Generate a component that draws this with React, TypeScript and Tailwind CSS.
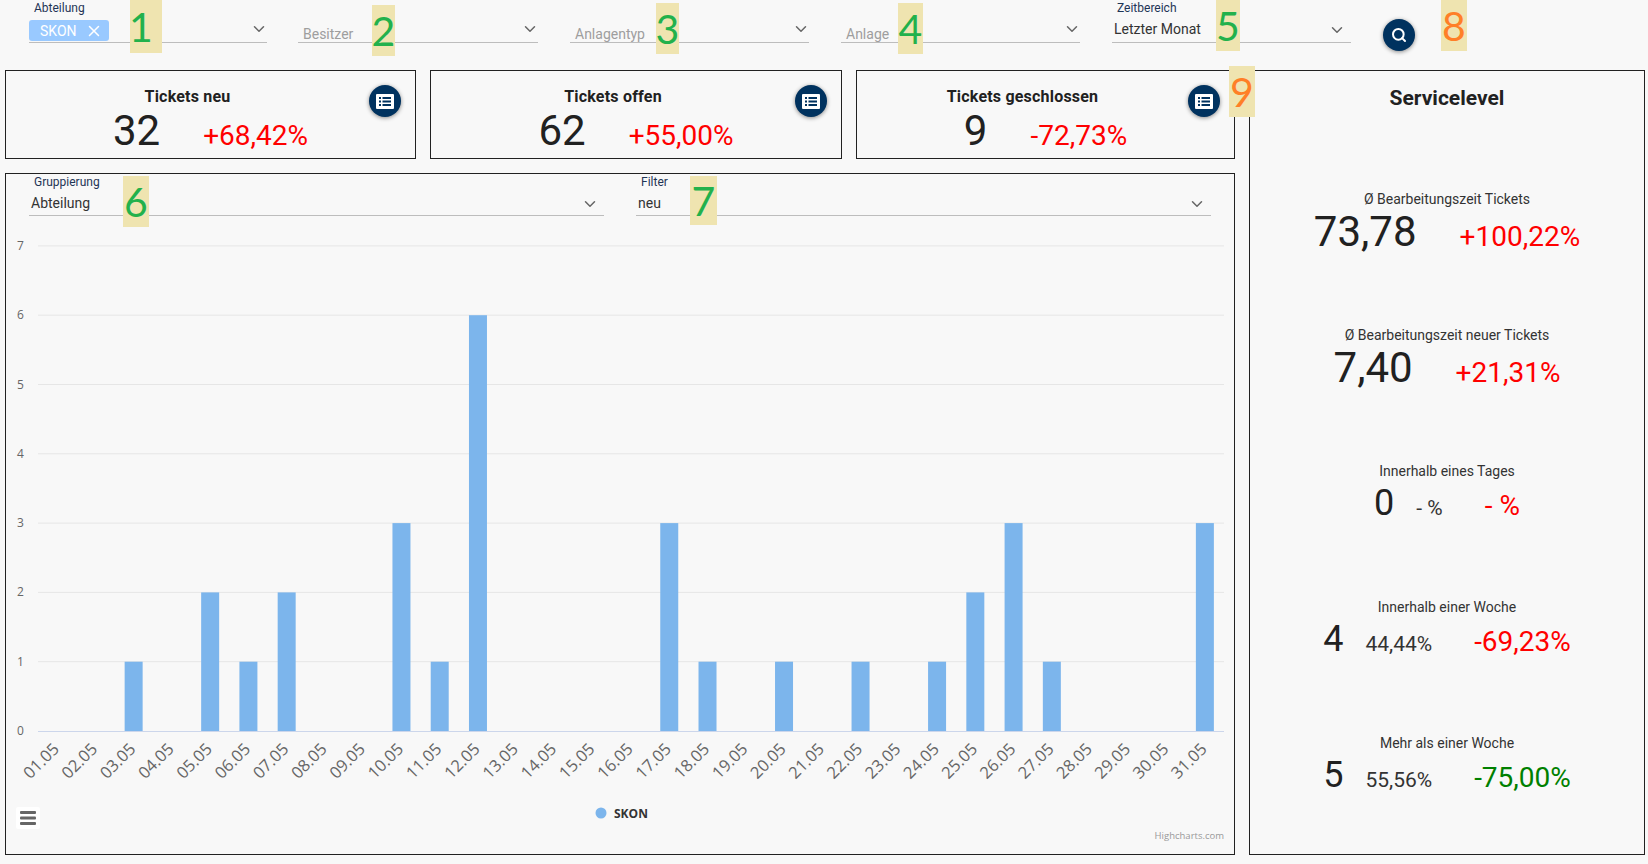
import { ChevronDown, Search, X } from 'lucide-react'

const roboto = "font-['Roboto',sans-serif]"

const days = Array.from({ length: 31 }, (_, i) => String(i + 1).padStart(2, '0') + '.05')
const counts: Record<number, number> = { 3: 1, 5: 2, 6: 1, 7: 2, 10: 3, 11: 1, 12: 6, 17: 3, 18: 1, 20: 1, 22: 1, 24: 1, 25: 2, 26: 3, 27: 1, 31: 3 }

function Select({ label, value, placeholder, chip, className, flush, short }: { label?: string; value?: string; placeholder?: string; chip?: string; className: string; flush?: boolean; short?: boolean }) {
  return (
    <div className={`flex flex-col ${className}`}>
      <div className="h-[16px] pl-[5px] text-xs leading-[16px] text-[#1f3556]">{label}</div>
      <div className={`flex items-center justify-between border-b border-[#bdbdbd] ${short ? 'h-[26px]' : 'h-[27px]'} ${flush ? 'pr-0' : 'pr-[5px]'}`}>
        {chip && (
          <span className="mt-[3px] flex h-[21px] w-[80px] items-center gap-[8px] rounded-[3px] bg-[#99c9ff] pl-[11px] text-sm text-white">
            {chip}
            <X size={18} strokeWidth={2} />
          </span>
        )}
        {value && <span className="pl-[2px] text-sm text-[#333]">{value}</span>}
        {placeholder && <span className="pl-[5px] pt-[9px] text-sm text-[#9e9e9e]">{placeholder}</span>}
        <ChevronDown size={18} strokeWidth={2} className={flush ? '-mr-[1px] text-[#666]' : 'mt-[2px] text-[#666]'} />
      </div>
    </div>
  )
}

function ListButton() {
  return (
    <button className="absolute right-[14px] top-[14px] flex h-[32px] w-[32px] items-center justify-center rounded-full bg-[#00325f] shadow-[0_1px_4px_rgba(0,0,0,0.45)]">
      <svg width="18" height="15" viewBox="0 0 18 15">
        <rect width="18" height="15" rx="1" fill="#fff" />
        <rect x="3" y="3" width="2" height="2" fill="#00325f" />
        <rect x="3" y="6.5" width="2" height="2" fill="#00325f" />
        <rect x="3" y="10" width="2" height="2" fill="#00325f" />
        <rect x="6.5" y="3" width="8.5" height="2" fill="#00325f" />
        <rect x="6.5" y="6.5" width="8.5" height="2" fill="#00325f" />
        <rect x="6.5" y="10" width="8.5" height="2" fill="#00325f" />
      </svg>
    </button>
  )
}

function TicketCard({ title, count, change, className }: { title: string; count: string; change: string; className: string }) {
  return (
    <div className={`relative h-[89px] border border-[#212121] ${className}`}>
      <ListButton />
      <div className="pr-[46px] pt-[15px] text-center text-base font-bold leading-[22px] tracking-[0.2px] text-[#212121]">{title}</div>
      <div className="flex items-baseline justify-center gap-[43px] leading-[46px]">
        <span className="text-[42px] text-[#212121]">{count}</span>
        <span className="text-[28px] text-[#ff0000]">{change}</span>
      </div>
    </div>
  )
}

function ServiceRow({ label, value, share, change, big, green }: { label: string; value: string; share?: string; change: string; big?: boolean; green?: boolean }) {
  return (
    <div className="flex h-[136px] flex-col items-center">
      <div className="h-[20px] text-sm leading-[20px] text-[#333]">{label}</div>
      <div className={`flex items-baseline ${big ? 'h-[42px] gap-[43px] leading-[46px]' : 'h-[44px] leading-[44px]'}`}>
        <span className={big ? 'text-[42px] text-[#212121]' : 'text-[36px] text-[#212121]'}>{value}</span>
        {share && <span className="ml-[22px] text-[21px] text-[#333]">{share}</span>}
        <span className={`${big ? '' : 'ml-[42px]'} text-[28px] ${green ? 'text-[#008000]' : 'text-[#ff0000]'}`}>{change}</span>
      </div>
    </div>
  )
}

// column chart, coordinates are the ones of the chart card
function Chart() {
  const left = 32
  const right = 1218
  const zero = 513
  const unit = 69.3
  const step = (right - left) / 31
  return (
    <svg width="1228" height="636" className="block">
      {[1, 2, 3, 4, 5, 6, 7].map((n) => (
        <line key={n} x1={left} x2={right} y1={zero - n * unit} y2={zero - n * unit} stroke="#e6e6e6" />
      ))}
      <line x1={left} x2={right} y1={zero + 0.5} y2={zero + 0.5} stroke="#ccd6eb" />
      {[0, 1, 2, 3, 4, 5, 6, 7].map((n) => (
        <text key={n} x="11" y={zero - n * unit + 4} fontSize="12" fill="#666" fontFamily="Open Sans, sans-serif">{n}</text>
      ))}
      {days.map((d, i) => {
        const cx = left + step * (i + 0.5)
        const h = (counts[i + 1] ?? 0) * unit
        return (
          <g key={d}>
            {h > 0 && <rect x={cx - 9} y={zero - h} width="18" height={h} fill="#7cb5ec" />}
            <text x={cx + 3} y="532" textAnchor="end" fontSize="16.500" fill="#666" fontFamily="Open Sans, sans-serif" transform={`rotate(-45 ${cx + 3} 532)`}>{d}</text>
          </g>
        )
      })}
      <circle cx="595" cy="595" r="5.5" fill="#7cb5ec" />
      <text x="608" y="600" fontSize="12" fontWeight="700" fill="#333" fontFamily="Open Sans, sans-serif">SKON</text>
      <rect x="10" y="589" width="24" height="22" rx="2" fill="#fff" />
      <rect x="14" y="593" width="16" height="3" rx="1" fill="#666" />
      <rect x="14" y="598.500" width="16" height="3" rx="1" fill="#666" />
      <rect x="14" y="604" width="16" height="3" rx="1" fill="#666" />
      <text x="1218" y="621" textAnchor="end" fontSize="9.500" fill="#999" fontFamily="Open Sans, sans-serif">Highcharts.com</text>
    </svg>
  )
}

function Mark({ n, orange, className }: { n: string; orange?: boolean; className: string }) {
  return (
    <div className={`absolute flex items-center justify-center bg-[#efe4b0] font-['Lato',sans-serif] text-[41px] leading-none ${orange ? 'text-[#ff7f27]' : 'text-[#22b14c]'} ${className}`}>
      {n}
    </div>
  )
}

export default function App() {
  return (
    <div className={`relative h-[864px] w-[1648px] overflow-hidden bg-[#f8f8f8] ${roboto}`}>
      <div className="flex h-[70px] pl-[29px]">
        <Select flush className="mr-[31px] w-[238px]" label="Abteilung" chip="SKON" />
        <Select flush className="mr-[32px] w-[240px]" placeholder="Besitzer" />
        <Select flush className="mr-[32px] w-[239px]" placeholder="Anlagentyp" />
        <Select flush className="mr-[32px] w-[239px]" placeholder="Anlage" />
        <Select className="w-[239px]" label="Zeitbereich" value="Letzter Monat" />
        <button className="ml-[32px] mt-[19px] flex h-[32px] w-[32px] items-center justify-center rounded-full bg-[#00325f] text-white shadow-[0_1px_4px_rgba(0,0,0,0.45)]">
          <Search size={16} strokeWidth={3} />
        </button>
      </div>

      <div className="flex gap-[14px] pl-[5px]">
        <div className="flex w-[1230px] flex-col gap-[14px]">
          <div className="flex gap-[14px]">
            <TicketCard className="w-[411px]" title="Tickets neu" count="32" change="+68,42%" />
            <TicketCard className="w-[412px]" title="Tickets offen" count="62" change="+55,00%" />
            <TicketCard className="w-[379px]" title="Tickets geschlossen" count="9" change="-72,73%" />
          </div>
          <div className="h-[682px] border border-[#212121]">
            <div className="flex h-[44px] gap-[32px] px-[23px]">
              <Select short className="w-[575px]" label="Gruppierung" value="Abteilung" />
              <Select short className="w-[575px]" label="Filter" value="neu" />
            </div>
            <Chart />
          </div>
        </div>

        <div className="h-[785px] w-[396px] border border-[#212121]">
          <div className="h-[118px] pt-[13px] text-center text-[21px] font-bold leading-[28px] text-[#212121]">Servicelevel</div>
          <ServiceRow big label="Ø Bearbeitungszeit Tickets" value="73,78" change="+100,22%" />
          <ServiceRow big label="Ø Bearbeitungszeit neuer Tickets" value="7,40" change="+21,31%" />
          <ServiceRow label="Innerhalb eines Tages" value="0" share="- %" change="- %" />
          <ServiceRow label="Innerhalb einer Woche" value="4" share="44,44%" change="-69,23%" />
          <ServiceRow label="Mehr als einer Woche" value="5" share="55,56%" change="-75,00%" green />
        </div>
      </div>

      <Mark n="1" className="left-[130px] top-0 h-[53px] w-[32px] pr-[10px]" />
      <Mark n="2" className="left-[372px] top-[5px] h-[51px] w-[23px]" />
      <Mark n="3" className="left-[656px] top-[3px] h-[51px] w-[23px]" />
      <Mark n="4" className="left-[898px] top-[3px] h-[51px] w-[25px]" />
      <Mark n="5" className="left-[1216px] top-0 h-[51px] w-[24px]" />
      <Mark n="6" className="left-[123px] top-[176px] h-[51px] w-[26px]" />
      <Mark n="7" className="left-[690px] top-[176px] h-[49px] w-[27px]" />
      <Mark n="8" orange className="left-[1441px] top-0 h-[51px] w-[26px]" />
      <Mark n="9" orange className="left-[1229px] top-[66px] h-[51px] w-[26px]" />
    </div>
  )
}
